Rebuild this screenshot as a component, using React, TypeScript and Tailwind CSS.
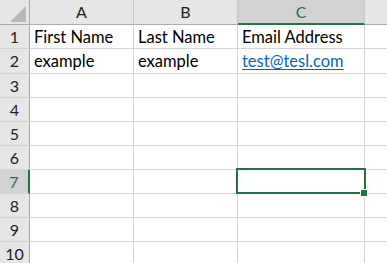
const cols = ["A", "B", "C"];

const rowHeights = ["h-[24px]", "h-[25px]", "h-[24px]", "h-[24px]", "h-[24px]", "h-[24px]", "h-[24px]", "h-[24px]", "h-[24px]", "h-[24px]"];

const data: Record<number, [string, string, string]> = {
  1: ["First Name", "Last Name", "Email Address"],
  2: ["example", "example", "test@tesl.com"],
};

export default function App() {
  return (
    <div
      className="relative w-[387px] h-[263px] overflow-hidden bg-white text-[16px] text-black"
      style={{ fontFamily: "Lato, 'Noto Sans', sans-serif" }}
    >
      {/* column headers */}
      <div className="flex h-[25px]">
        <div className="relative w-[30px] shrink-0 bg-[#e6e6e6] border-r border-b border-[#ababab]">
          <div className="absolute right-[3px] bottom-[2px] w-0 h-0 border-l-[16px] border-l-transparent border-b-[16px] border-b-[#b7b7b7]" />
        </div>
        {cols.map((c) => {
          const sel = c === "C";
          const w = c === "C" ? "w-[127px]" : "w-[104px]";
          return (
            <div
              key={c}
              className={`${w} shrink-0 flex items-center justify-center border-r border-[#c6c6c6] ${
                sel
                  ? "bg-[#d2d2d2] text-[#217346] border-b-2 border-b-[#217346]"
                  : "bg-[#e6e6e6] text-[#222] border-b border-b-[#ababab]"
              }`}
            >
              {c}
            </div>
          );
        })}
        <div className="flex-1 bg-[#e6e6e6] border-b border-[#ababab]" />
      </div>

      {/* rows */}
      {rowHeights.map((h, i) => {
        const n = i + 1;
        const sel = n === 7;
        const vals = data[n] || ["", "", ""];
        return (
          <div key={n} className={`flex ${h}`}>
            <div
              className={`w-[30px] shrink-0 flex items-center justify-center border-b border-[#d4d4d4] ${
                sel
                  ? "bg-[#d2d2d2] text-[#217346] border-r-2 border-r-[#217346]"
                  : "bg-[#e6e6e6] text-[#222] border-r border-r-[#ababab]"
              }`}
            >
              {n}
            </div>
            {vals.map((v, j) => (
              <div
                key={j}
                className={`${j === 2 ? "w-[127px]" : "w-[104px]"} shrink-0 flex items-center pl-[4px] pt-[1px] text-[16.5px] border-r border-b border-[#d4d4d4] whitespace-nowrap`}
              >
                {j === 2 && n === 2 ? (
                  <span className="text-[#0563c1] underline underline-offset-2">{v}</span>
                ) : (
                  v
                )}
              </div>
            ))}
            <div className="flex-1 border-b border-[#d4d4d4]" />
          </div>
        );
      })}

      {/* selection C7 */}
      <div className="absolute left-[236px] top-[168px] w-[130px] h-[26px] border-2 border-[#217346]" />
      <div className="absolute left-[360px] top-[189px] w-[8px] h-[8px] bg-[#217346] border border-white" />
    </div>
  );
}
